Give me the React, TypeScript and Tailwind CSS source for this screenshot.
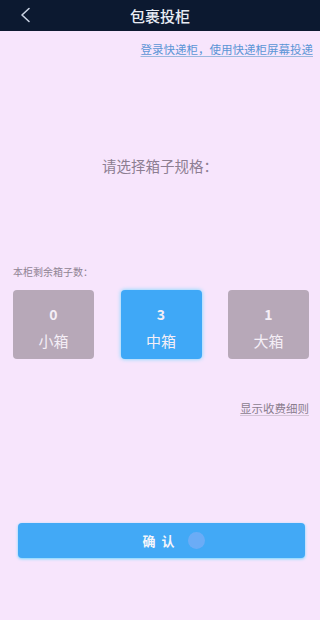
const font = { fontFamily: '"Noto Sans CJK SC", "Noto Sans", sans-serif' };

type Box = { count: number; name: string; active?: boolean };

const boxes: Box[] = [
  { count: 0, name: "小箱" },
  { count: 3, name: "中箱", active: true },
  { count: 1, name: "大箱" },
];

export default function App() {
  return (
    <div className="flex h-[620px] w-[320px] flex-col overflow-hidden bg-[#f7e5fc]" style={font}>
      <header className="relative flex h-[31px] shrink-0 items-center justify-center bg-[#0c1930]">
        <svg className="absolute left-[19px] top-[7px] h-[16px] w-[12px]" viewBox="0 0 12 16" fill="none">
          <path d="M10 1.5 L3 8 L10 14.5" stroke="#c9d2e2" strokeWidth="1.6" strokeLinecap="round" strokeLinejoin="round" />
        </svg>
        <span className="text-[15px] font-medium leading-none text-[#e8ecf4]">包裹投柜</span>
      </header>

      <div className="flex justify-end pr-[7px] pt-[11px]">
        <span className="text-[11.5px] leading-[15px] text-[#5b95d6] underline decoration-[#9bb7de] underline-offset-2">
          登录快递柜，使用快递柜屏幕投递
        </span>
      </div>

      <p className="mt-[100px] text-center text-[14.5px] leading-[18px] text-[#8d7e92]">请选择箱子规格：</p>

      <p className="mt-[90px] pl-[13px] text-[10px] leading-[13px] text-[#8f8393]">本柜剩余箱子数：</p>

      <div className="mt-[12px] flex justify-between pl-[13px] pr-[11px]">
        {boxes.map((b) => (
          <div
            key={b.name}
            className={
              b.active
                ? "flex h-[69px] w-[81px] flex-col items-center rounded-[4px] bg-[#3fa8f7] shadow-[0_0_4px_#6fd8ff]"
                : "flex h-[69px] w-[81px] flex-col items-center rounded-[4px] bg-[#b7a8b8]"
            }
          >
            <span className="mt-[16px] text-[14px] font-bold leading-[16px] text-[#f4eef6]">{b.count}</span>
            <span className="mt-[10px] text-[15px] leading-[18px] text-[#f4eef6]">{b.name}</span>
          </div>
        ))}
      </div>

      <div className="mt-[42px] flex justify-end pr-[11px]">
        <span className="text-[11.5px] leading-[15px] text-[#8a7d8e] underline decoration-[#d3c4d6] underline-offset-2">
          显示收费细则
        </span>
      </div>

      <div className="mt-[107px] px-[18px]">
        <button className="relative flex h-[35px] w-[287px] items-center justify-center rounded-[4px] bg-[#42a9f6] shadow-[0_1px_3px_#70d8ff]">
          <span className="text-[13px] font-bold tracking-[6px] text-[#f5f5fa]">确认</span>
          <span className="absolute left-[170px] top-[9px] h-[17px] w-[17px] rounded-full bg-[#7eaef7]/70" />
        </button>
      </div>
    </div>
  );
}
